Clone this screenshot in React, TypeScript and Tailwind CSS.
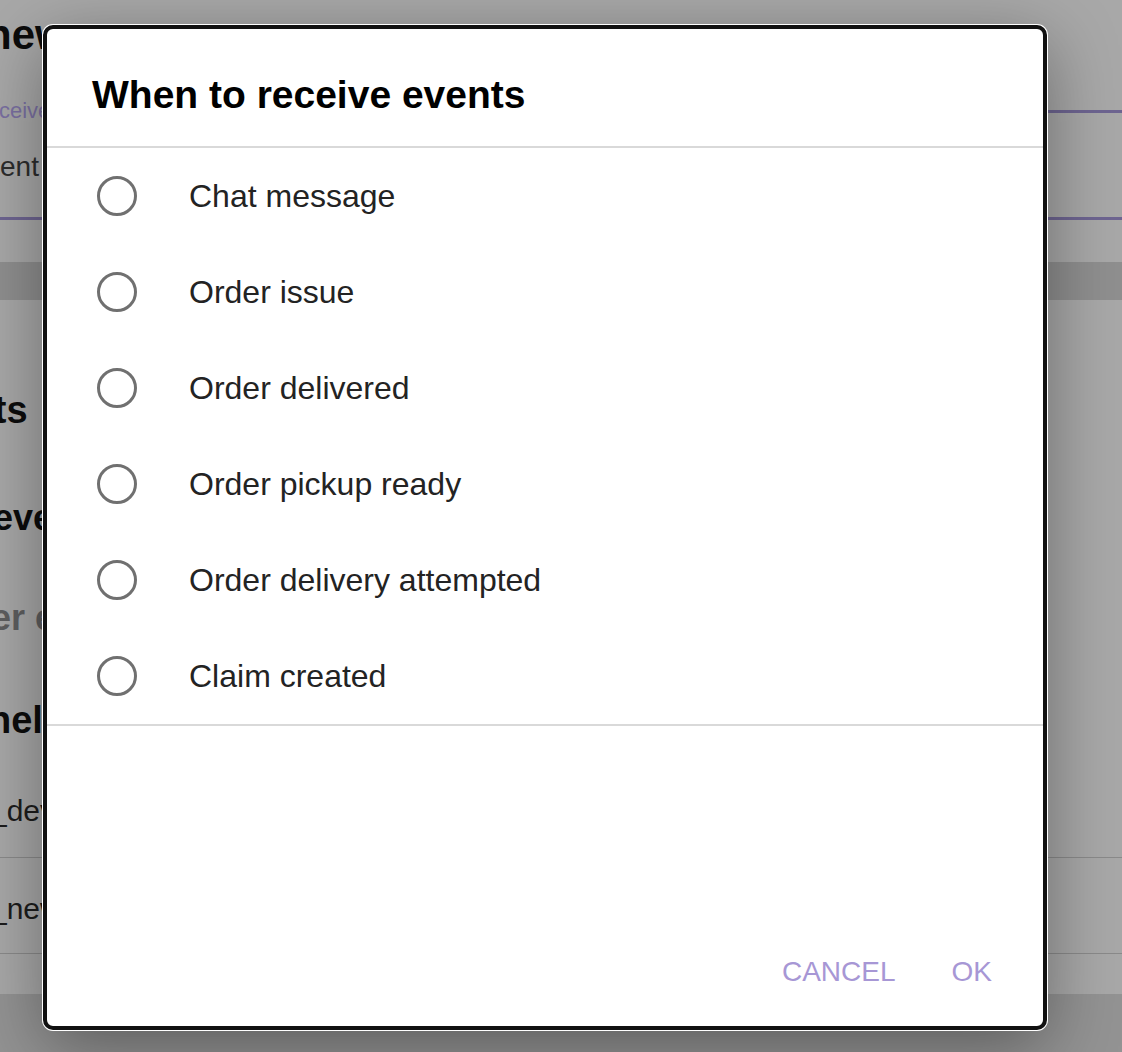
import { useState } from 'react';

const eventOptions = [
  'Chat message',
  'Order issue',
  'Order delivered',
  'Order pickup ready',
  'Order delivery attempted',
  'Claim created',
];

// The page behind the modal, already dimmed by the scrim
function Backdrop() {
  return (
    <div className="flex h-[1052px] w-[1122px] flex-col overflow-hidden whitespace-nowrap bg-[#a8a8a8]">
      <div className="pt-[14px]">
        <div className="ml-[-14px] text-[42px] font-bold leading-none text-[#0c0c0c]">new</div>
      </div>

      <div className="mt-[43px] flex h-[24px] items-center">
        <span className="ml-[-1px] pr-2 text-[22px] leading-none text-[#7a70a2]">ceive events</span>
        <div className="h-[3px] flex-1 bg-[#6e6591]" />
      </div>
      <div className="mt-[30px] text-[28px] leading-none text-[#2c2c2c]">ent</div>
      <div className="mt-[36px] h-[3px] bg-[#6e6591]" />

      <div className="mt-[42px] h-[38px] bg-[#8f8f8f]" />

      <div className="mt-[91px] ml-[-97px] text-[38px] font-bold leading-none text-[#0c0c0c]">Events</div>
      <div className="mt-[71px] ml-[-7px] text-[36px] font-bold leading-none text-[#0c0c0c]">events</div>
      <div className="mt-[64px] ml-[-9px] text-[36px] font-bold leading-none text-[#5e5e5f]">er events</div>
      <div className="mt-[65px] ml-[-12px] text-[38px] font-bold leading-none text-[#0c0c0c]">nels</div>

      <div className="mt-[57px] ml-[-10px] text-[30px] leading-none text-[#1c1c1c]">_dev</div>
      <div className="mt-[31px] h-px bg-[#8a8a8a]" />
      <div className="mt-[36px] ml-[-10px] text-[30px] leading-none text-[#1c1c1c]">_new</div>
      <div className="mt-[29px] h-px bg-[#8a8a8a]" />

      <div className="mt-[40px] flex-1 bg-[#939393]" />
    </div>
  );
}

function Radio({ checked }: { checked: boolean }) {
  return (
    <span className="flex h-10 w-10 shrink-0 items-center justify-center rounded-full border-[3px] border-[#707070]">
      {checked && <span className="h-5 w-5 rounded-full bg-[#a797d5]" />}
    </span>
  );
}

export default function App() {
  const [selected, setSelected] = useState<string | null>(null);

  return (
    <div className="relative h-[1052px] w-[1122px] overflow-hidden font-['Liberation_Sans',Arial,sans-serif]">
      <Backdrop />

      <div className="absolute inset-0 pl-[43px] pt-[25px]">
        <div
          role="dialog"
          className="flex h-[1005px] w-[1004px] flex-col rounded-[10px] border-4 border-[#111] bg-white shadow-[0_18px_70px_rgba(0,0,0,0.38)] ring-1 ring-white"
        >
          <div className="border-b-2 border-[#d9d9d9] pb-[32px] pl-[45px] pt-[46px]">
            <h2 className="text-[39px] font-bold leading-none text-black">When to receive events</h2>
          </div>

          <div className="flex flex-col">
            {eventOptions.map((option) => (
              <button
                key={option}
                type="button"
                onClick={() => setSelected(option)}
                className="flex h-[96px] items-center pl-[50px] text-left"
              >
                <Radio checked={selected === option} />
                <span className="ml-[52px] text-[32px] leading-none text-[#232323]">{option}</span>
              </button>
            ))}
          </div>

          <div className="flex flex-1 flex-col justify-end border-t-2 border-[#d9d9d9]">
            <div className="mb-[40px] flex h-[28px] items-center justify-end gap-[56px] pr-[51px]">
              <button type="button" className="text-[28px] leading-none text-[#a797d5]">
                CANCEL
              </button>
              <button type="button" className="text-[28px] leading-none text-[#a797d5]">
                OK
              </button>
            </div>
          </div>
        </div>
      </div>
    </div>
  );
}
